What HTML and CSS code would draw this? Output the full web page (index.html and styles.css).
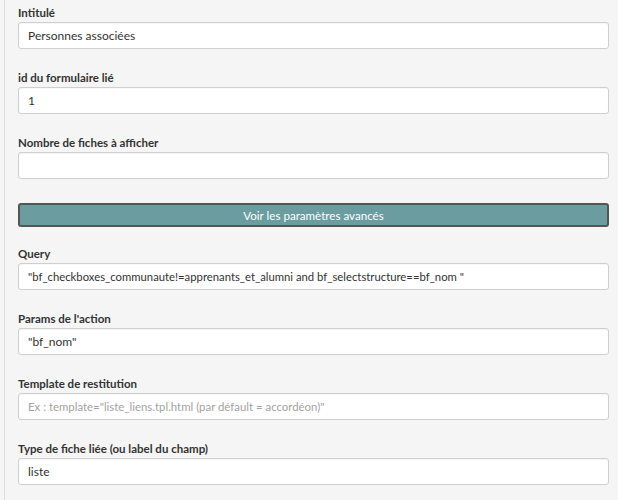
FILE: index.html
```html
<!DOCTYPE html>
<html lang="fr">
<head>
<meta charset="utf-8">
<title>Paramètres</title>
<link rel="stylesheet" href="styles.css">
</head>
<body>
<div class="panel">
  <form class="form">
    <div class="group">
      <label class="label">Intitulé</label>
      <input class="input" type="text" value="Personnes associées">
    </div>
    <div class="group">
      <label class="label">id du formulaire lié</label>
      <input class="input" type="text" value="1">
    </div>
    <div class="group">
      <label class="label">Nombre de fiches à afficher</label>
      <input class="input" type="text" value="">
    </div>
    <button class="btn-advanced" type="button">Voir les paramètres avancés</button>
    <div class="group">
      <label class="label">Query</label>
      <input class="input input-query" type="text" value="&quot;bf_checkboxes_communaute!=apprenants_et_alumni and bf_selectstructure==bf_nom &quot;">
    </div>
    <div class="group">
      <label class="label">Params de l'action</label>
      <input class="input" type="text" value="&quot;bf_nom&quot;">
    </div>
    <div class="group">
      <label class="label">Template de restitution</label>
      <input class="input input-placeholder" type="text" placeholder="Ex : template=&quot;liste_liens.tpl.html (par défault = accordéon)&quot;">
    </div>
    <div class="group">
      <label class="label">Type de fiche liée (ou label du champ)</label>
      <input class="input" type="text" value="liste">
    </div>
  </form>
</div>
</body>
</html>
```

FILE: styles.css
```css
html, body {
  margin: 0;
  padding: 0;
  background: #f5f5f5;
  font-family: Lato, "Liberation Sans", sans-serif;
  color: #333;
}

.panel {
  margin-left: 4px;
  border-left: 1px solid #dcdcdc;
  min-height: 500px;
  padding: 4px 9px 0 13px;
}

.form {
  display: flex;
  flex-direction: column;
}

.group {
  display: flex;
  flex-direction: column;
  margin-bottom: 20px;
}

.label {
  font-weight: 700;
  font-size: 11.5px;
  line-height: 17px;
  margin-bottom: 1px;
  color: #333;
}

.input {
  box-sizing: border-box;
  height: 27px;
  margin-top: 0;
  padding: 0 9px;
  border: 1px solid #cfcfcf;
  border-radius: 3px;
  background: #fff;
  font-family: Lato, "Liberation Sans", sans-serif;
  font-size: 12px;
  color: #333;
  box-shadow: inset 0 1px 1px rgba(0,0,0,0.04);
}

.input-query {
  font-size: 11.3px;
}

.input-placeholder {
  font-size: 11.4px;
}

.input::placeholder {
  color: #a3a3a3;
}

.btn-advanced {
  box-sizing: border-box;
  height: 24px;
  margin: 4px 0 18px;
  border: 2px solid #555;
  border-radius: 3px;
  background: #6a9ca0;
  color: #fff;
  font-family: Lato, "Liberation Sans", sans-serif;
  font-size: 11.6px;
  padding: 0;
}
```
